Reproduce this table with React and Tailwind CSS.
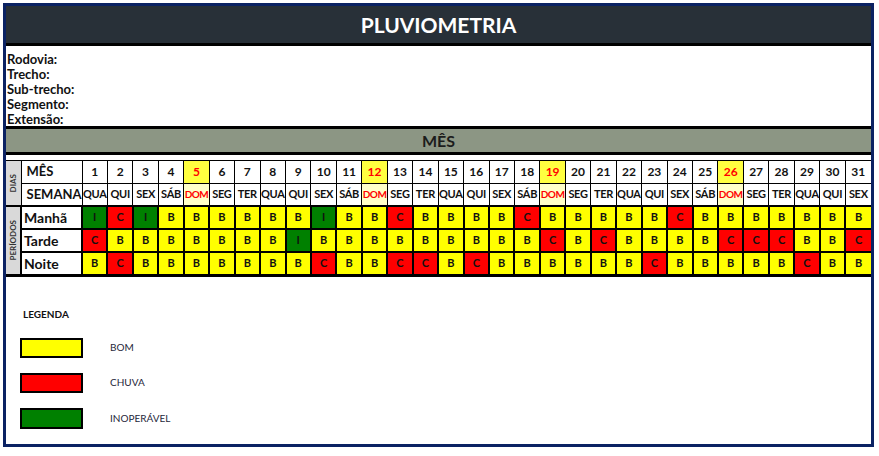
import React from 'react'

const weekdays = ['QUA', 'QUI', 'SEX', 'SÁB', 'DOM', 'SEG', 'TER']

const periods = [
  { label: 'Manhã', values: 'ICIBBBBBBIBBCBBBBCBBBBBCBBBBBBB' },
  { label: 'Tarde', values: 'CBBBBBBBIBBBBBBBBBCBCBBBBCCCBBC' },
  { label: 'Noite', values: 'BCBBBBBBBCBBCCBCBBBBBBCBBBBBCBB' },
]

const cellColor = {
  B: 'bg-[#ffff00]',
  C: 'bg-[#ff0000]',
  I: 'bg-[#008000]',
}

const days = Array.from({ length: 31 }, (_, i) => i + 1)

export default function App() {
  return (
    <div className="w-[879px] h-[456px] bg-white pt-[3px] pl-[3px] font-['Lato','Liberation_Sans',sans-serif]">
      <div className="w-[871px] h-[444px] border-[3px] border-[#0b2263] bg-white flex flex-col">
        {/* Title */}
        <div className="h-[37px] bg-[#283038] flex items-center justify-center">
          <h1 className="text-white font-bold text-[21px] leading-none">PLUVIOMETRIA</h1>
        </div>
        <div className="h-[3px] bg-black" />

        {/* Info */}
        <div className="h-[80px] overflow-hidden pt-[6px] pl-px text-[13px] leading-[15px] font-bold text-[#111]">
          <p>Rodovia:</p>
          <p>Trecho:</p>
          <p>Sub-trecho:</p>
          <p>Segmento:</p>
          <p>Extensão:</p>
        </div>
        <div className="h-[3px] bg-black" />
        <div className="h-[23px] bg-[#8c9684] flex items-center justify-center">
          <span className="font-bold text-[16px] text-[#1c1c1c]">MÊS</span>
        </div>
        <div className="h-[3px] bg-black" />
        <div className="h-[5px]" />

        {/* Table */}
        <table className="w-full table-fixed border-collapse text-[#111]">
          <colgroup>
            <col className="w-[15px]" />
            <col className="w-[61px]" />
            {days.map(d => <col key={d} />)}
          </colgroup>
          <tbody>
            <tr className="h-[23px]">
              <td rowSpan={2} className="bg-[#d9d9d9] border border-black border-l-0 p-0">
                <div className="flex items-center justify-center">
                  <span className="[writing-mode:vertical-rl] rotate-180 text-[8px] font-bold text-[#333] leading-none">DIAS</span>
                </div>
              </td>
              <td className="border border-black pl-[5px] text-[13px] font-bold">MÊS</td>
              {days.map(d => {
                const sun = weekdays[(d - 1) % 7] === 'DOM'
                return (
                  <td
                    key={d}
                    className={`border border-black text-center text-[12px] font-bold p-0 ${sun ? 'bg-[#ffff40] text-[#ff0000]' : ''} ${d === 31 ? 'border-r-0' : ''}`}
                  >
                    {d}
                  </td>
                )
              })}
            </tr>
            <tr className="h-[22px]">
              <td className="border border-black pl-[5px] text-[13px] font-bold overflow-hidden whitespace-nowrap">SEMANA</td>
              {days.map(d => {
                const w = weekdays[(d - 1) % 7]
                const sun = w === 'DOM'
                return (
                  <td
                    key={d}
                    className={`border border-black text-center font-bold p-0 overflow-hidden whitespace-nowrap ${sun ? 'bg-[#ffffc8] text-[#ff0000] text-[10px] tracking-[-0.5px]' : 'text-[11px] tracking-[-0.3px]'} ${d === 31 ? 'border-r-0' : ''}`}
                  >
                    {w}
                  </td>
                )
              })}
            </tr>
            {periods.map((p, ri) => (
              <tr key={p.label} className="h-[23px]">
                {ri === 0 && (
                  <td rowSpan={3} className="bg-[#d9d9d9] border-2 border-black border-l-0 border-b-[3px] p-0">
                    <div className="flex items-center justify-center">
                      <span className="[writing-mode:vertical-rl] rotate-180 text-[8px] font-bold text-[#333] leading-none">PERÍODOS</span>
                    </div>
                  </td>
                )}
                <td className={`border-2 border-black pl-[2px] text-[14px] font-bold bg-white ${ri === 2 ? 'border-b-[3px]' : ''}`}>
                  {p.label}
                </td>
                {p.values.split('').map((v, i) => (
                  <td
                    key={i}
                    className={`border-2 border-black text-center text-[11px] font-bold p-0 ${cellColor[v]} ${ri === 2 ? 'border-b-[3px]' : ''} ${i === 30 ? 'border-r-0' : ''}`}
                  >
                    {v}
                  </td>
                ))}
              </tr>
            ))}
          </tbody>
        </table>

        {/* Legend */}
        <div className="flex flex-col pl-[14px] pt-[30px]">
          <p className="pl-[3px] text-[10px] font-bold text-[#111] leading-[14px]">LEGENDA</p>
          <div className="mt-[17px] flex flex-col gap-[15px]">
            {[
              ['bg-[#ffff00]', 'BOM', 'h-[20px]'],
              ['bg-[#ff0000]', 'CHUVA', 'h-[20px]'],
              ['bg-[#008000]', 'INOPERÁVEL', 'h-[21px]'],
            ].map(([bg, label, h]) => (
              <div key={label} className="flex items-center">
                <div className={`w-[63px] ${h} border-2 border-black ${bg}`} />
                <span className="ml-[27px] text-[10px] text-[#1f1f3a]">{label}</span>
              </div>
            ))}
          </div>
        </div>
      </div>
    </div>
  )
}
